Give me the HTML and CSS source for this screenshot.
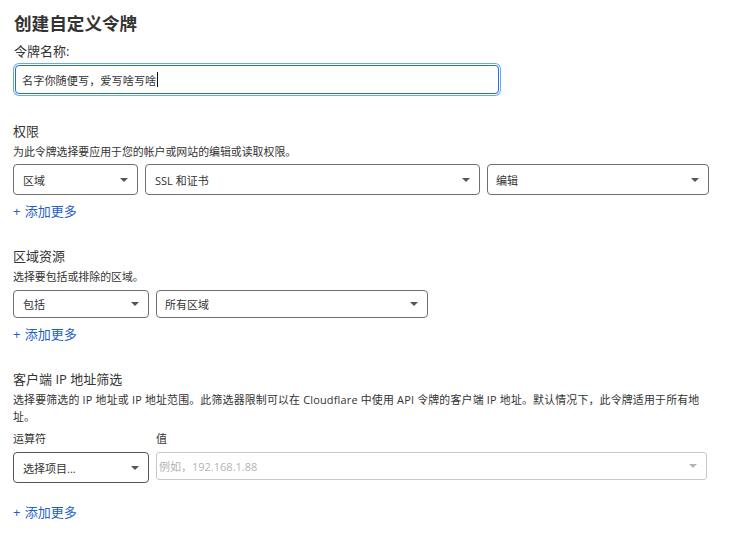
FILE: index.html
```html
<!DOCTYPE html>
<html lang="zh-CN">
<head>
<meta charset="utf-8">
<title>创建自定义令牌</title>
<link rel="stylesheet" href="styles.css">
</head>
<body>
<div class="page">
  <h1 class="title">创建自定义令牌</h1>
  <div class="label name-label">令牌名称:</div>
  <div class="text-input focused"><span class="value">名字你随便写，爱写啥写啥</span><span class="caret"></span></div>

  <div class="section-title s-perm">权限</div>
  <div class="desc">为此令牌选择要应用于您的帐户或网站的编辑或读取权限。</div>
  <div class="row row-perm">
    <div class="select w125"><span>区域</span><i class="arrow"></i></div>
    <div class="select w335"><span>SSL 和证书</span><i class="arrow"></i></div>
    <div class="select w222"><span class="tight">编辑</span><i class="arrow"></i></div>
  </div>
  <div class="add">+ <span>添加更多</span></div>

  <div class="section-title s-zone">区域资源</div>
  <div class="desc">选择要包括或排除的区域。</div>
  <div class="row row-zone">
    <div class="select w136 short"><span>包括</span><i class="arrow"></i></div>
    <div class="select w272 short"><span class="tight">所有区域</span><i class="arrow"></i></div>
  </div>
  <div class="add">+ <span>添加更多</span></div>

  <div class="section-title s-ip">客户端 IP 地址筛选</div>
  <div class="desc desc-long">选择要筛选的 IP 地址或 IP 地址范围。此筛选器限制可以在 Cloudflare 中使用 API 令牌的客户端 IP 地址。默认情况下，此令牌适用于所有地<br>址。</div>
  <div class="ip-grid">
    <div class="col-label">运算符</div>
    <div class="col-label">值</div>
    <div class="select w136 op"><span>选择项目...</span><i class="arrow"></i></div>
    <div class="value-input"><span class="placeholder">例如，192.168.1.88</span><i class="arrow light"></i></div>
  </div>
  <div class="add add-last">+ <span>添加更多</span></div>
</div>
</body>
</html>
```

FILE: styles.css
```css
* { box-sizing: border-box; }
html, body { margin: 0; padding: 0; background: #fff; }
body {
  font-family: "Open Sans", "Noto Sans CJK SC", sans-serif;
  color: #333;
}
.page {
  padding: 11px 0 0 13px;
  width: 740px;
  display: flex;
  flex-direction: column;
  align-items: flex-start;
}
.title {
  margin: 0 0 0 1px;
  font-size: 17.6px;
  line-height: 24px;
  font-weight: 700;
  color: #333;
}
.label {
  margin: 8px 0 0 1px;
  font-size: 13px;
  line-height: 16px;
  color: #333;
}
.text-input {
  margin: 6px 0 0 2px;
  width: 484px;
  height: 29px;
  border: 1px solid #1e6fe6;
  border-radius: 4px;
  box-shadow: 0 0 0 1px #ffffff, 0 0 0 2px #6ea6f2;
  display: flex;
  align-items: center;
  padding-left: 6px;
  font-size: 11.2px;
  color: #333;
}
.caret {
  display: inline-block;
  width: 1px;
  height: 15px;
  background: #111;
  margin-left: 1px;
}
.section-title {
  margin-top: 29px;
  font-size: 13px;
  line-height: 16px;
  color: #333;
}
.desc {
  margin-top: 6px;
  font-size: 10.9px;
  line-height: 14px;
  color: #333;
}
.row {
  margin-top: 5px;
  display: flex;
  gap: 7px;
}
.row-zone { margin-top: 6px; }
.select {
  height: 31px;
  border: 1px solid #6f6f6f;
  border-radius: 4px;
  display: flex;
  align-items: center;
  justify-content: space-between;
  padding: 0 9px 0 9px;
  font-size: 11px;
  color: #333;
}
.select.short { height: 28px; }
.select .tight { margin-left: -1px; }
.w125 { width: 125px; }
.w335 { width: 335px; }
.w222 { width: 222px; }
.w136 { width: 136px; }
.w272 { width: 272px; }
.arrow {
  display: block;
  width: 0;
  height: 0;
  border-left: 4px solid transparent;
  border-right: 4px solid transparent;
  border-top: 4px solid #555;
}
.arrow.light { border-top-color: #b5b5b5; }
.add {
  margin-top: 8px;
  font-size: 13px;
  line-height: 16px;
  color: #1f5fc8;
  white-space: pre;
}
.add span { margin-left: 1px; }
.desc-long {
  margin-top: 4px;
  width: 700px;
  line-height: 17px;
  letter-spacing: 0.2px;
}
.ip-grid {
  margin-top: 7px;
  display: grid;
  grid-template-columns: 136px 551px;
  column-gap: 7px;
  row-gap: 6px;
  align-items: start;
}
.col-label {
  font-size: 11px;
  line-height: 14px;
  color: #333;
}
.op { border-color: #555; }
.value-input {
  height: 28px;
  border: 1px solid #c8c8c8;
  border-radius: 3px;
  display: flex;
  align-items: center;
  justify-content: space-between;
  padding: 0 9px 0 2px;
  font-size: 11px;
}
.placeholder { color: #b3b3b3; }
.add-last { margin-top: 21px; }
```
